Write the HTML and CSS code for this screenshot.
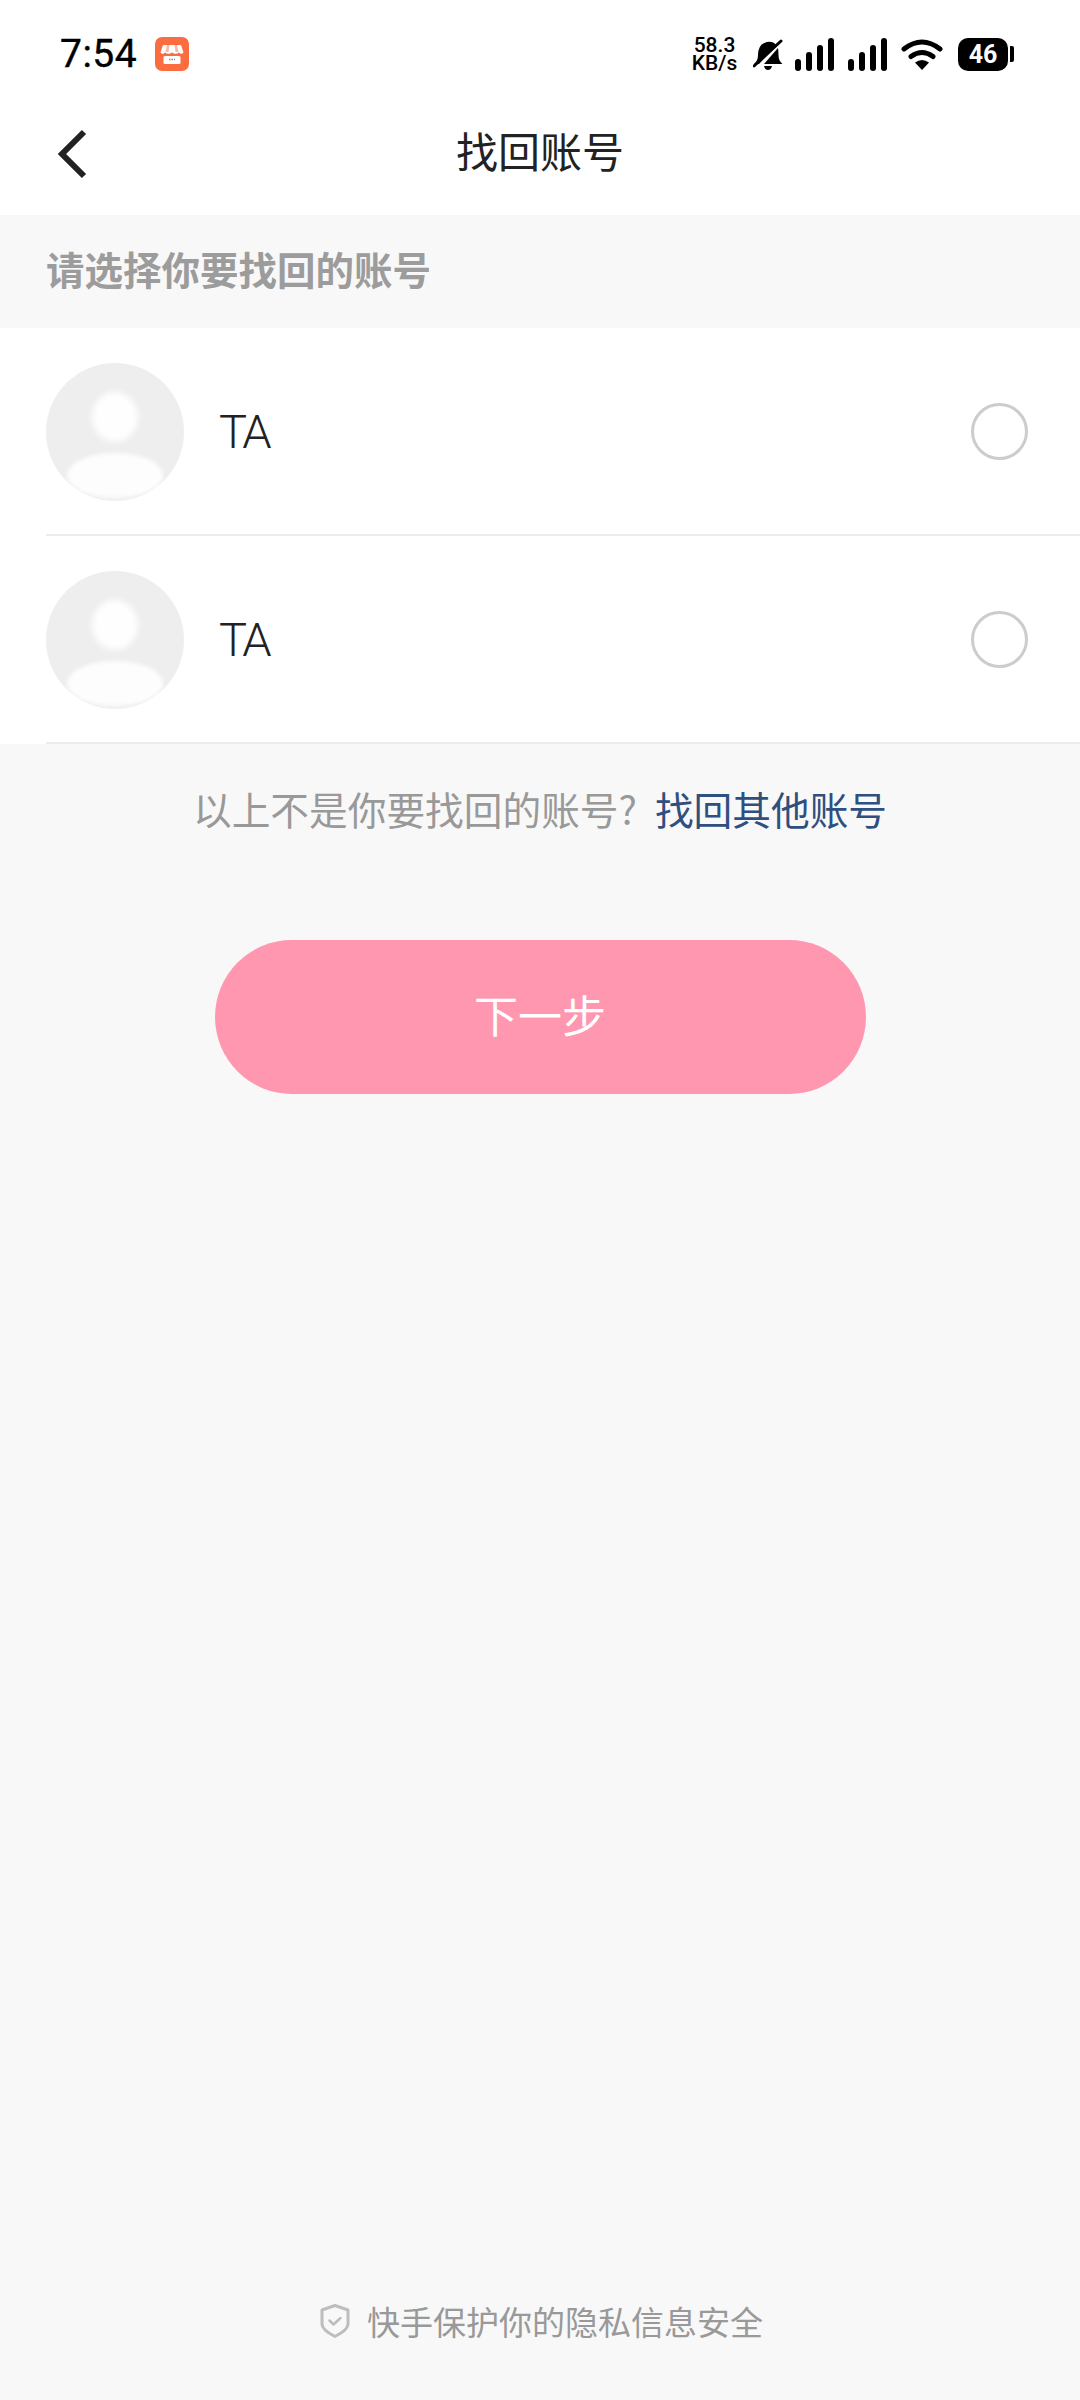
FILE: index.html
```html
<!DOCTYPE html>
<html lang="zh-CN">
<head>
<meta charset="utf-8">
<title>找回账号</title>
<link rel="stylesheet" href="styles.css">
</head>
<body>
<div class="page">
  <div class="statusbar">
    <div class="status-left">
      <span class="time">7:54</span>
      <svg class="shop" viewBox="0 0 34 34" width="34" height="34">
        <rect width="34" height="34" rx="7" fill="#fb6d41"/>
        <path d="M8 8h18l2.500 7.500q-2.300 2.500-4.500 0q-3.500 2.500-7 0q-3.500 2.500-7 0q-2.200 2.500-4.500 0z" fill="#fff"/>
        <path d="M12 8h2.500l-1 7h-3zM19.500 8H22l1.500 7h-3z" fill="#fbb9a4"/>
        <rect x="8.500" y="19" width="17" height="8" rx="1.500" fill="#fff"/>
        <path d="M14 22.500h6" stroke="#8a8f9c" stroke-width="1.500" stroke-dasharray="1.500 1"/>
      </svg>
    </div>
    <div class="status-right">
      <div class="speed"><span>58.3</span><span>KB/s</span></div>
      <svg class="bell" viewBox="0 0 30 36" width="30" height="36">
        <path d="M1 28q4-3 4-9q0-11 9-13q6-1 9 3L6 28zM25 12q.500 3 .500 7q0 6 4 9H11zM11 30h8q-1 4-4 4t-4-4z" fill="#000"/>
        <path d="M1 30L28 5" stroke="#000" stroke-width="3" stroke-linecap="round"/>
      </svg>
      <svg class="signal" viewBox="0 0 39 33" width="39" height="33">
        <g fill="#000">
          <rect x="0" y="21" width="6" height="12" rx="3"/>
          <rect x="11" y="14" width="6" height="19" rx="3"/>
          <rect x="22" y="7" width="6" height="26" rx="3"/>
          <rect x="33" y="0" width="6" height="33" rx="3"/>
        </g>
      </svg>
      <svg class="signal" viewBox="0 0 39 33" width="39" height="33">
        <g fill="#000">
          <rect x="0" y="21" width="6" height="12" rx="3"/>
          <rect x="11" y="14" width="6" height="19" rx="3"/>
          <rect x="22" y="7" width="6" height="26" rx="3"/>
          <rect x="33" y="0" width="6" height="33" rx="3"/>
        </g>
      </svg>
      <svg class="wifi" viewBox="0 0 42 32" width="42" height="32">
        <path d="M3 11q18-14 36 0M10 18.500q11-8 22 0" fill="none" stroke="#000" stroke-width="5" stroke-linecap="round"/>
        <path d="M14 24.500q7-5 14 0L21 32z" fill="#000"/>
      </svg>
      <div class="battery"><span class="battery-body">46</span><span class="battery-tip"></span></div>
    </div>
  </div>

  <header class="navbar">
    <svg class="back" viewBox="0 0 32 52" width="32" height="52">
      <path d="M28 4L6 26l22 22" fill="none" stroke="#222" stroke-width="6"/>
    </svg>
    <h1 class="title">找回账号</h1>
  </header>

  <div class="section-title">请选择你要找回的账号</div>

  <div class="list">
    <div class="row">
      <div class="avatar"><span class="av-head"></span><span class="av-body"></span></div>
      <div class="row-main">
        <span class="name">TA</span>
        <span class="radio"></span>
      </div>
    </div>
    <div class="row">
      <div class="avatar"><span class="av-head"></span><span class="av-body"></span></div>
      <div class="row-main">
        <span class="name">TA</span>
        <span class="radio"></span>
      </div>
    </div>
  </div>

  <p class="other">以上不是你要找回的账号?<a class="other-link">找回其他账号</a></p>

  <button class="next">下一步</button>

  <footer class="footer">
    <svg class="shield" viewBox="0 0 32 36" width="32" height="36">
      <path d="M16 2.500L29 7v14q0 6-13 12.500Q3 27 3 21V7z" fill="none" stroke="#bdbdbd" stroke-width="3" stroke-linejoin="round"/>
      <path d="M10.500 17.500l4 4 7-6.500" fill="none" stroke="#bdbdbd" stroke-width="2.500" stroke-linecap="round" stroke-linejoin="round"/>
    </svg>
    <span>快手保护你的隐私信息安全</span>
  </footer>
</div>
</body>
</html>
```
FILE: styles.css
```css
* { box-sizing: border-box; }
html, body { margin: 0; padding: 0; }
body {
  width: 1080px;
  height: 2400px;
  background: #f8f8f8;
  font-family: "Noto Sans CJK SC", "Roboto", sans-serif;
  overflow: hidden;
}
.page { height: 2400px; display: flex; flex-direction: column; }

.statusbar {
  height: 108px;
  background: #fff;
  display: flex;
  align-items: center;
  justify-content: space-between;
  padding: 0 66px 0 60px;
}
.status-left { display: flex; align-items: center; gap: 18px; }
.time { font: 400 39px/1 "Roboto", sans-serif; color: #000; letter-spacing: 0.5px; -webkit-text-stroke: 0.4px #000; }
.shop { display: block; }
.status-right { display: flex; align-items: center; }
.speed {
  display: flex;
  flex-direction: column;
  align-items: center;
  width: 47px;
  font: 500 21px/18px "Roboto", sans-serif;
  color: #000;
  margin-right: 15px;
}
.bell { margin-right: 12px; }
.signal { margin-right: 14px; }
.wifi { margin-right: 15px; }
.battery { display: flex; align-items: center; gap: 2px; }
.battery-body {
  width: 50px;
  height: 33px;
  border-radius: 10px;
  background: #000;
  color: #fff;
  font: 700 25px/33px "Roboto", sans-serif;
  text-align: center;
}
.battery-tip { width: 4px; height: 16px; background: #000; border-radius: 0 2px 2px 0; }

.navbar {
  height: 107px;
  background: #fff;
  position: relative;
  display: flex;
  align-items: center;
  justify-content: center;
  padding-bottom: 24px;
}
.back { position: absolute; left: 56px; top: 20px; }
.title { margin: 0; font-size: 42px; font-weight: 400; color: #222; }

.section-title {
  height: 113px;
  display: flex;
  align-items: center;
  padding: 0 0 8px 46px;
  font-size: 38.5px;
  font-weight: 700;
  color: #9c9c9c;
}

.list { background: #fff; }
.row {
  height: 208px;
  display: flex;
  align-items: stretch;
  padding-left: 46px;
}
.avatar {
  width: 138px;
  height: 138px;
  margin-top: 35px;
  border-radius: 50%;
  background: #eeeeee;
  position: relative;
  overflow: hidden;
  flex: none;
}
.av-head {
  position: absolute;
  left: 46px;
  top: 29px;
  width: 46px;
  height: 50px;
  border-radius: 50%;
  background: #fefefe;
  filter: blur(3px);
}
.av-body {
  position: absolute;
  left: 21px;
  top: 90px;
  width: 96px;
  height: 45px;
  border-radius: 50%;
  background: #fdfdfd;
  filter: blur(2px);
}
.row-main {
  flex: 1;
  display: flex;
  align-items: center;
  justify-content: space-between;
  padding: 0 52px 0 35px;
  border-bottom: 2px solid #ececec;
  position: relative;
}
.row-main::before {
  content: "";
  position: absolute;
  left: -138px;
  width: 138px;
  bottom: -2px;
  height: 2px;
  background: #ececec;
}
.name { font: 300 47px/1 "Roboto", sans-serif; color: #222; letter-spacing: -3px; }
.radio {
  width: 57px;
  height: 57px;
  border-radius: 50%;
  border: 3px solid #cccccc;
  background: #fff;
}

.other {
  margin: 36px 0 0;
  text-align: center;
  font-size: 38.7px;
  line-height: 56px;
  color: #999;
}
.other-link { color: #2f4f7f; margin-left: 18px; }

.next {
  align-self: center;
  margin-top: 104px;
  width: 651px;
  height: 154px;
  border: 0;
  border-radius: 77px;
  background: #ff97b0;
  color: #fff;
  font-family: inherit;
  font-size: 44px;
  padding: 0 0 6px;
}

.footer {
  margin-top: auto;
  margin-bottom: 58px;
  padding-left: 2px;
  height: 42px;
  display: flex;
  align-items: center;
  justify-content: center;
  gap: 16px;
  font-size: 33px;
  color: #999;
}
.shield { display: block; }
```
